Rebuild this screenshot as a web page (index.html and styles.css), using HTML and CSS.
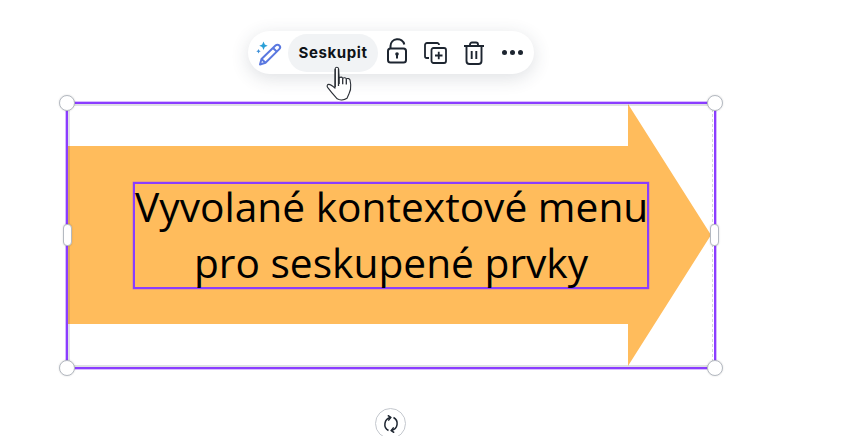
FILE: index.html
```html
<!DOCTYPE html>
<html lang="cs">
<head>
    <meta charset="UTF-8">
    <meta name="viewport" content="width=device-width, initial-scale=1.0">
    <title>Kontextové menu</title>
    <link rel="stylesheet" href="styles.css">
</head>
<body>
    <div class="toolbar">
        <button class="nastroj nastroj-magic" aria-label="Magic">
            <svg width="30" height="30" viewBox="0 0 30 30" fill="none">
                <path d="M5 26.500l1.500-5.500L20.500 7.500c1.200-1.100 2.800-1.100 3.800 0 1 1 1 2.600 0 3.600L10.500 24.800z" stroke="#5a78e0" stroke-width="2" stroke-linejoin="round"/>
                <path d="M6.500 21l4 3.800M18 10l4.200 4" stroke="#5a78e0" stroke-width="2"/>
                <path d="M8.500 3.500l1.300 2.900 2.900 1.300-2.900 1.300-1.300 2.900-1.300-2.900-2.900-1.300 2.900-1.300z" fill="#2a9fd6"/>
                <path d="M3.500 11l.7 1.500 1.500.7-1.500.7-.7 1.500-.7-1.500-1.500-.7 1.500-.7z" fill="#3d8fd8"/>
            </svg>
        </button>
        <button class="seskupit">Seskupit</button>
        <button class="nastroj" aria-label="Odemknout">
            <svg class="ikona-zamek" width="22" height="26" viewBox="0 0 22 26" fill="none" stroke="#1d2530" stroke-width="2">
                <rect x="2" y="10.500" width="18" height="14" rx="2.500"/>
                <path d="M4.500 10.500V8A7 7 0 0 1 18.300 6.500"/>
                <circle cx="11" cy="16" r="1.800" fill="#1d2530" stroke="none"/>
                <path d="M11 16v4.500"/>
            </svg>
        </button>
        <button class="nastroj" aria-label="Duplikovat">
            <svg width="23" height="22" viewBox="0 0 23 22" fill="none" stroke="#1d2530" stroke-width="1.800">
                <path d="M15 3V2.800A1.800 1.800 0 0 0 13.200 1H3A2 2 0 0 0 1 3v11.200A1.800 1.800 0 0 0 2.800 16H5"/>
                <rect x="7.500" y="6" width="14.500" height="15" rx="2"/>
                <path d="M14.750 9.800v7.400M11 13.500h7.500"/>
            </svg>
        </button>
        <button class="nastroj" aria-label="Smazat">
            <svg width="22" height="24" viewBox="0 0 22 24" fill="none" stroke="#1d2530" stroke-width="1.900">
                <path d="M1 5h20M7 5V3.500A2 2 0 0 1 9 1.500h4a2 2 0 0 1 2 2V5"/>
                <path d="M3.500 5v15a3 3 0 0 0 3 3h9a3 3 0 0 0 3-3V5"/>
                <path d="M8.700 10v8M13.300 10v8"/>
            </svg>
        </button>
        <button class="nastroj" aria-label="Více">
            <span class="tecka"></span><span class="tecka"></span><span class="tecka"></span>
        </button>
    </div>

    <svg class="kurzor" width="30" height="36" viewBox="0 0 30 36">
        <path d="M10.200 2.500c.3-1.700 3-1.700 3.300 0l.6 9.300c1.500-.9 3-.6 3.600.4 1.400-.8 3-.5 3.600.6 1.600-.6 3.300-.2 3.700 1.200l.7 4.500c.3 3.500-.3 6.800-1.700 9.200l-2 4.500c-3 2-7.300 2.200-9.800.6-2.800-3-6.500-7.200-9.600-11.400-1-1.500-.3-3 1.100-3 1.800 0 3.900 1.500 6.300 3.800z" fill="#fff" stroke="#2b2f36" stroke-width="1.100" stroke-linejoin="round"/>
        <path d="M10.200 3v18M13.500 3v17" stroke="#2b2f36" stroke-width="1.300" fill="none"/>
        <path d="M14.100 12v6M17.700 12.300v6M21.300 13v5.500" stroke="#2b2f36" stroke-width="1.300" fill="none"/>
    </svg>

    <div class="seleccion">
        <svg class="sipka" width="650" height="266" viewBox="0 0 650 266">
            <path d="M0 42H560V0L643 131 560 262V220H0z" fill="#ffbc5c"/>
        </svg>
        <div class="texto"><div class="lineas">Vyvolané kontextové menu<br>pro seskupené prvky</div></div>

        <span class="uchyt roh roh-1"></span>
        <span class="uchyt roh roh-2"></span>
        <span class="uchyt roh roh-3"></span>
        <span class="uchyt roh roh-4"></span>
        <span class="uchyt bok bok-1"></span>
        <span class="uchyt bok bok-2"></span>
    </div>

    <button class="rotar" aria-label="Otočit">
        <svg width="18" height="18" viewBox="0 0 18 18" fill="none" stroke="#1d2530" stroke-width="1.500">
            <path d="M6.500 15.500A7 7 0 0 1 8.500 2.500"/>
            <path d="M5.800 0.300L8.800 2.500 6.300 5.600"/>
            <path d="M11.500 2.500A7 7 0 0 1 9.500 15.500"/>
            <path d="M12.200 17.700L9.200 15.500 11.700 12.400"/>
        </svg>
    </button>
</body>
</html>
```

FILE: styles.css
```css
html, body {
    height: 100%;
}

body {
    margin: 0;
    background-color: #fff;
    font-family: "Open Sans", sans-serif;
    overflow: hidden;
    position: relative;
}

button {
    border: 0;
    background: none;
    padding: 0;
    font-family: inherit;
}

/* barra de arriba */
.toolbar {
    width: 286px;
    height: 43px;
    margin: 31px 0 0 248px;
    box-sizing: border-box;
    padding: 0 2px 0 7px;
    display: flex;
    align-items: center;
    background-color: #fff;
    border-radius: 22px;
    box-shadow: 0 4px 18px rgba(50, 60, 80, 0.16);
}

.nastroj {
    display: flex;
    flex: none;
    align-items: center;
    justify-content: center;
    gap: 3px;
    height: 38px;
    width: 38.5px;
}

.nastroj-magic {
    width: 30px;
    margin-right: 3px;
}

.ikona-zamek {
    margin-top: -3px;
}

.seskupit {
    flex: none;
    width: 90px;
    height: 38px;
    background-color: #f1f3f5;
    border-radius: 19px;
    font-family: "Inter", sans-serif;
    font-weight: 700;
    font-size: 15px;
    letter-spacing: 0.6px;
    color: #0e1318;
}

.tecka {
    width: 5px;
    height: 5px;
    border-radius: 50%;
    background-color: #1d2530;
}

.kurzor {
    position: absolute;
    left: 325px;
    top: 66px;
    z-index: 5;
}

/* seleccion con la flecha */
.seleccion {
    position: relative;
    width: 646px;
    height: 263px;
    margin: 28px 0 0 66px;
    border: 2px solid #8b3dff;
    box-shadow: 0 0 0 0.5px rgba(139, 61, 255, 0.7);
}

.seleccion::after {
    content: "";
    position: absolute;
    inset: 0 1px 0 0;
    border: 2px solid rgba(60, 70, 90, 0.16);
    border-right: 1px dashed rgba(60, 70, 90, 0.22);
    pointer-events: none;
}

.sipka {
    position: absolute;
    left: 0;
    top: 0;
}

.texto {
    position: absolute;
    left: 65px;
    top: 78px;
    width: 512px;
    height: 103px;
    border: 2px solid #8b3dff;
    box-shadow: 0 0 0 0.3px rgba(139, 61, 255, 0.7);
    text-align: center;
    font-size: 40.7px;
    line-height: 56px;
    white-space: nowrap;
    color: #000;
}

.lineas {
    margin-top: -6px;
}

.uchyt {
    position: absolute;
    z-index: 2;
    box-sizing: border-box;
    background-color: #fff;
    border: 1px solid #b4b9c1;
    box-shadow: 0 0 2px rgba(0, 0, 0, 0.15);
}

.roh {
    width: 16px;
    height: 16px;
    border-radius: 50%;
}

.roh-1 { left: -9px; top: -9px; }
.roh-2 { right: -9px; top: -9px; }
.roh-3 { left: -9px; bottom: -9px; }
.roh-4 { right: -9px; bottom: -9px; }

.bok {
    width: 9px;
    height: 22px;
    border-radius: 4px;
    top: 120px;
}

.bok-1 { left: -5px; }
.bok-2 { right: -5px; }

.rotar {
    position: absolute;
    left: 375px;
    top: 408px;
    width: 31px;
    height: 31px;
    border: 1px solid #c4c8ce;
    border-radius: 50%;
    background-color: #fff;
    display: flex;
    align-items: center;
    justify-content: center;
}
```
